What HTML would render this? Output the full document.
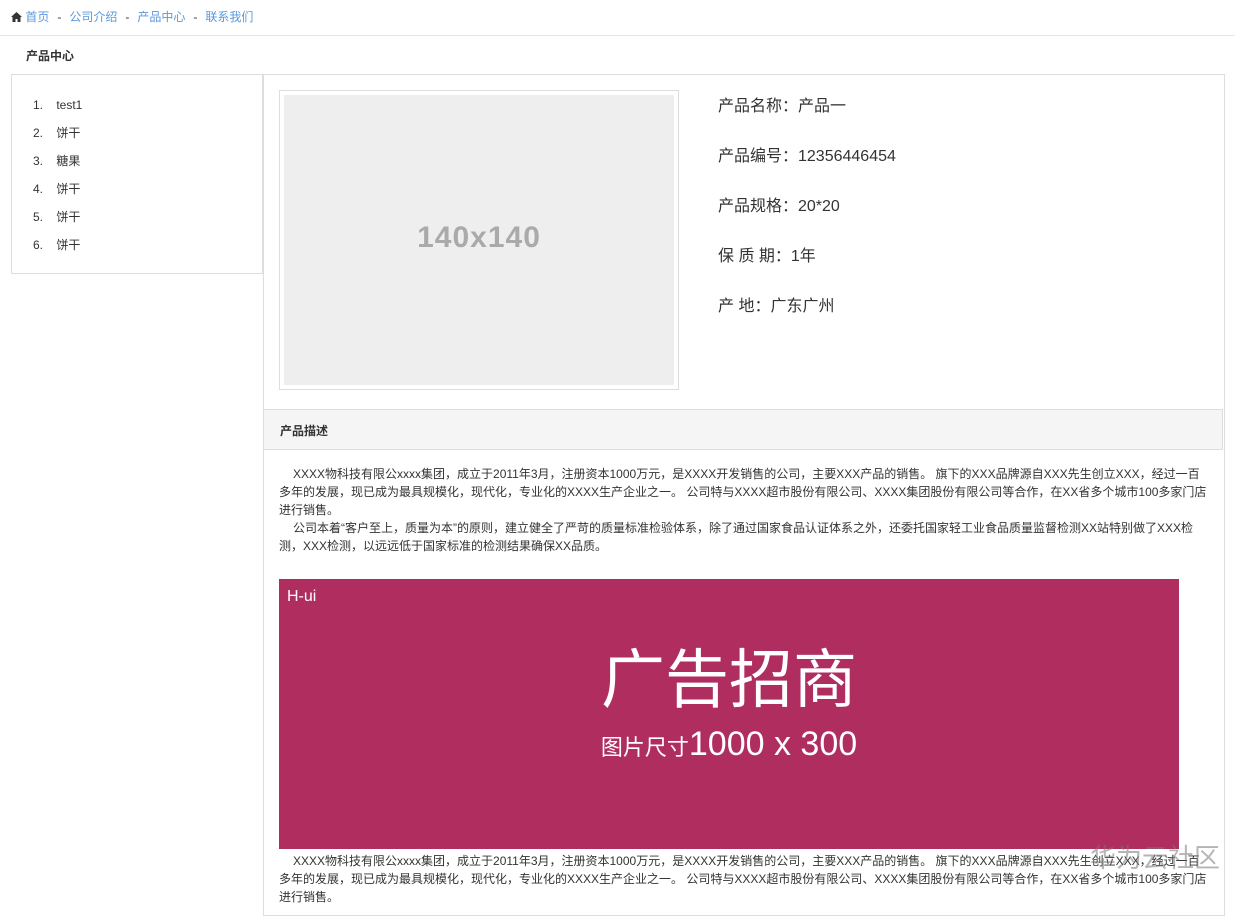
<!DOCTYPE html><html><head><meta charset="utf-8"><style>
body{margin:0;background:#fff;font-family:"Liberation Sans","Noto Sans CJK SC",sans-serif;font-size:12px;color:#333;width:1235px;height:904px;overflow:hidden;position:relative}
.a{position:absolute}
.bc{left:11px;top:8px;color:#333}
.bc a{color:#5a98de;text-decoration:none}
.bc span{margin:0 8px}
p{margin:0}
.desc{left:279px;width:930px;line-height:18px;font-size:12px}
.desc p{text-indent:14px}
.info div{position:absolute;left:718px;font-size:16px;color:#333;white-space:nowrap}
</style></head><body>
<div class="a bc"><svg width="11" height="10" viewBox="0 0 11 10" style="vertical-align:-1px"><path d="M5.5 0L0 5h1.5v5h3V7h2v3h3V5H11z" fill="#333"/></svg> <a>首页</a><span>-</span><a>公司介绍</a><span>-</span><a>产品中心</a><span>-</span><a>联系我们</a></div>
<div class="a" style="left:0;top:35px;width:1235px;height:1px;background:#e5e5e5"></div>
<div class="a" style="left:26px;top:47px;font-weight:bold;font-size:12px">产品中心</div>
<div class="a" style="left:11px;top:74px;width:250px;height:198px;border:1px solid #ddd"></div>
<div class="a" style="left:33px;top:91px;line-height:28px">
<div>1.&nbsp;&nbsp;&nbsp;&nbsp;test1</div><div>2.&nbsp;&nbsp;&nbsp;&nbsp;饼干</div><div>3.&nbsp;&nbsp;&nbsp;&nbsp;糖果</div><div>4.&nbsp;&nbsp;&nbsp;&nbsp;饼干</div><div>5.&nbsp;&nbsp;&nbsp;&nbsp;饼干</div><div>6.&nbsp;&nbsp;&nbsp;&nbsp;饼干</div></div>
<div class="a" style="left:263px;top:74px;width:960px;height:840px;border:1px solid #ddd"></div>
<div class="a" style="left:279px;top:90px;width:398px;height:298px;border:1px solid #ddd"></div>
<div class="a" style="left:284px;top:95px;width:390px;height:290px;background:#eee;color:#aaa;font-weight:bold;font-size:30px;letter-spacing:1px;text-align:center;line-height:286px">140x140</div>
<div class="info">
<div style="top:92px">产品名称：产品一</div>
<div style="top:142px">产品编号：12356446454</div>
<div style="top:192px">产品规格：20*20</div>
<div style="top:242px">保 质 期：1年</div>
<div style="top:292px">产 地：广东广州</div></div>
<div class="a" style="left:264px;top:409px;width:958px;height:39px;background:#f5f5f5;border:1px solid #ddd;border-left:0"></div>
<div class="a" style="left:280px;top:422px;font-weight:bold;font-size:12px">产品描述</div>
<div class="a desc" style="top:465px"><p>XXXX物科技有限公xxxx集团，成立于2011年3月，注册资本1000万元，是XXXX开发销售的公司，主要XXX产品的销售。 旗下的XXX品牌源自XXX先生创立XXX，经过一百多年的发展，现已成为最具规模化，现代化，专业化的XXXX生产企业之一。 公司特与XXXX超市股份有限公司、XXXX集团股份有限公司等合作，在XX省多个城市100多家门店进行销售。</p><p>公司本着“客户至上，质量为本”的原则，建立健全了严苛的质量标准检验体系，除了通过国家食品认证体系之外，还委托国家轻工业食品质量监督检测XX站特别做了XXX检测，XXX检测，以远远低于国家标准的检测结果确保XX品质。</p></div>
<div class="a" style="left:279px;top:579px;width:900px;height:270px;background:#b02d60;color:#fff">
<div class="a" style="left:8px;top:9px;font-size:16px">H-ui</div>
<div class="a" style="left:0;width:900px;top:64px;text-align:center;font-size:64px;line-height:74px">广告招商</div>
<div class="a" style="left:0;width:900px;top:146px;text-align:center;font-size:34px"><span style="font-size:22px">图片尺寸</span>1000 x 300</div></div>
<div class="a desc" style="top:852px"><p>XXXX物科技有限公xxxx集团，成立于2011年3月，注册资本1000万元，是XXXX开发销售的公司，主要XXX产品的销售。 旗下的XXX品牌源自XXX先生创立XXX，经过一百多年的发展，现已成为最具规模化，现代化，专业化的XXXX生产企业之一。 公司特与XXXX超市股份有限公司、XXXX集团股份有限公司等合作，在XX省多个城市100多家门店进行销售。</p></div>
<div class="a" style="left:1090px;top:838px;font-size:26px;color:rgba(120,120,120,.55)">华为云社区</div>
</body></html>
